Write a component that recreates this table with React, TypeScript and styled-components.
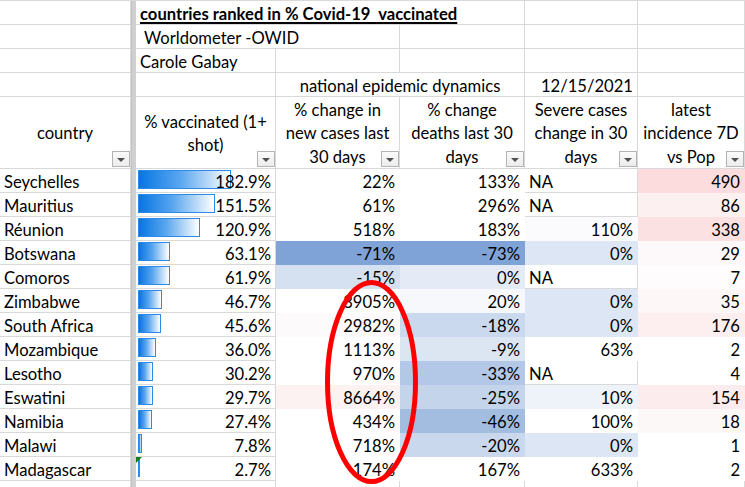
import React from "react"
import styled, { createGlobalStyle } from "styled-components"

const line = "#d9d9d9"

const GlobalStyle = createGlobalStyle`
  html, body {
    margin: 0;
    padding: 0;
    background: #fff;
    overflow: hidden;
  }
  body {
    font-family: Lato, "Open Sans", sans-serif;
    font-size: 16.6px;
    color: #000;
  }
`

const Page = styled.div`
  position: relative;
  width: 745px;
  height: 487px;
  overflow: hidden;
`

const Sheet = styled.div`
  display: grid;
  grid-template-columns: 131px 5px 140px 124px 125px 113px 107px;
  grid-template-rows: repeat(4, 24px) 72px repeat(14, 24px);
  border-top: 1px solid ${line};
`

const Frozen = styled.div`
  grid-column: 2;
  grid-row: 1 / -1;
  background: #d0d0d0;
  border-left: 1px solid #c4c4c4;
`

type CellProps = {
  $span?: number
  $align?: "left" | "right" | "center"
  $bg?: string
  $grid?: boolean
}

const Cell = styled.div<CellProps>`
  grid-column: span ${p => p.$span ?? 1};
  position: relative;
  box-sizing: border-box;
  background: ${p => p.$bg ?? "#fff"};
  border-right: 1px solid ${p => (p.$grid === false ? "transparent" : line)};
  border-bottom: 1px solid ${p => (p.$grid === false ? "transparent" : line)};
  padding: 2px 4px 0 4px;
  line-height: 22px;
  white-space: pre;
  text-align: ${p => p.$align ?? "left"};
`

const Title = styled.span`
  font-weight: 700;
  text-decoration: underline;
  text-decoration-thickness: 1.5px;
  text-underline-offset: 2px;
`

const HeaderCell = styled.div`
  position: relative;
  box-sizing: border-box;
  border-right: 1px solid ${line};
  border-bottom: 1px solid ${line};
  display: flex;
  align-items: center;
  justify-content: center;
  text-align: center;
  line-height: 23.5px;
  padding: 3px 2px 0;
  white-space: nowrap;
`

const FilterButton = styled.div`
  position: absolute;
  right: 0;
  bottom: 1px;
  width: 18px;
  height: 16px;
  box-sizing: border-box;
  border: 1px solid #b3b3b3;
  background: linear-gradient(#fbfbfb, #ececec);
  display: flex;
  align-items: center;
  justify-content: center;

  &::after {
    content: "";
    border-left: 4px solid transparent;
    border-right: 4px solid transparent;
    border-top: 4px solid #505050;
    margin-top: 1px;
  }
`

const BarCell = styled(Cell)`
  text-align: right;
`

const Bar = styled.div`
  position: absolute;
  left: 2px;
  top: 1px;
  height: 19px;
  box-sizing: border-box;
  border: 1px solid #2b8bea;
  background: linear-gradient(to right, #0676e2, #5aa6ef 45%, #ffffff);
`

const ErrorMark = styled.div`
  position: absolute;
  left: 0;
  top: 0;
  width: 0;
  height: 0;
  border-top: 6px solid #1c7a1c;
  border-right: 6px solid transparent;
`

const Value = styled.span`
  position: relative;
`

const Overlay = styled.svg`
  position: absolute;
  left: 0;
  top: 0;
  pointer-events: none;
`

type Fill = [string, string?]

type Row = {
  country: string
  vacc: number
  cases: Fill
  deaths: Fill
  severe: Fill
  incidence: Fill
  flag?: boolean
}

const rows: Row[] = [
  { country: "Seychelles", vacc: 182.9, cases: ["22%"], deaths: ["133%"], severe: ["NA"], incidence: ["490", "#fcdcdd"] },
  { country: "Mauritius", vacc: 151.5, cases: ["61%"], deaths: ["296%"], severe: ["NA"], incidence: ["86", "#fcf0f1"] },
  { country: "Réunion", vacc: 120.9, cases: ["518%"], deaths: ["183%"], severe: ["110%", "#fbfbfd"], incidence: ["338", "#fce1e2"] },
  { country: "Botswana", vacc: 63.1, cases: ["-71%", "#7fa3d6"], deaths: ["-73%", "#7fa3d6"], severe: ["0%", "#dce6f4"], incidence: ["29", "#fdf8f9"] },
  { country: "Comoros", vacc: 61.9, cases: ["-15%", "#d5e0f1"], deaths: ["0%", "#e4ebf6"], severe: ["NA"], incidence: ["7", "#fefcfd"] },
  { country: "Zimbabwe", vacc: 46.7, cases: ["3905%"], deaths: ["20%", "#f6f8fc"], severe: ["0%", "#dce6f4"], incidence: ["35", "#fdf7f8"] },
  { country: "South Africa", vacc: 45.6, cases: ["2982%", "#fdfafb"], deaths: ["-18%", "#cbd9ee"], severe: ["0%", "#dce6f4"], incidence: ["176", "#fdeff0"] },
  { country: "Mozambique", vacc: 36.0, cases: ["1113%"], deaths: ["-9%", "#dce6f3"], severe: ["63%"], incidence: ["2"] },
  { country: "Lesotho", vacc: 30.2, cases: ["970%"], deaths: ["-33%", "#b3c8e6"], severe: ["NA"], incidence: ["4"] },
  { country: "Eswatini", vacc: 29.7, cases: ["8664%", "#fdf2f2"], deaths: ["-25%", "#c3d4eb"], severe: ["10%", "#eef2f9"], incidence: ["154", "#fdeced"] },
  { country: "Namibia", vacc: 27.4, cases: ["434%"], deaths: ["-46%", "#a3bde1"], severe: ["100%"], incidence: ["18", "#fdf8f8"] },
  { country: "Malawi", vacc: 7.8, cases: ["718%"], deaths: ["-20%", "#c9d8ed"], severe: ["0%", "#dce6f4"], incidence: ["1"] },
  { country: "Madagascar", vacc: 2.7, cases: ["174%"], deaths: ["167%"], severe: ["633%"], incidence: ["2"], flag: true },
]

const headers = [
  "country",
  "% vaccinated (1+\nshot)",
  "% change in\nnew cases last\n30 days",
  "% change\ndeaths last 30\ndays",
  "Severe cases\nchange in 30\ndays",
  "latest\nincidence 7D\nvs Pop",
]

const Header = ({ text }: { text: string }) => (
  <HeaderCell>
    <span>
      {text.split("\n").map((t, i) => (
        <React.Fragment key={i}>
          {i > 0 && <br />}
          {t}
        </React.Fragment>
      ))}
    </span>
    <FilterButton />
  </HeaderCell>
)

const DataCell = ({ fill }: { fill: Fill }) => {
  const [text, bg] = fill
  if (text === "NA") return <Cell $align="left">NA</Cell>
  return (
    <Cell $grid={false} $align="right" $bg={bg}>
      {text}
    </Cell>
  )
}

export default function App() {
  return (
    <Page>
      <GlobalStyle />
      <Sheet>
        <Frozen />

        <Cell />
        <Cell $span={3}>
          <Title>countries ranked in % Covid-19  vaccinated</Title>
        </Cell>
        <Cell />
        <Cell />

        <Cell />
        <Cell $span={2}> Worldometer -OWID</Cell>
        <Cell />
        <Cell />
        <Cell />

        <Cell />
        <Cell>Carole Gabay</Cell>
        <Cell />
        <Cell />
        <Cell />
        <Cell />

        <Cell />
        <Cell />
        <Cell $span={2} $align="center">national epidemic dynamics</Cell>
        <Cell $align="right">12/15/2021</Cell>
        <Cell />

        {headers.map(h => (
          <Header key={h} text={h} />
        ))}

        {rows.map(r => (
          <React.Fragment key={r.country}>
            <Cell>{r.country}</Cell>
            <BarCell>
              <Bar style={{ width: Math.max(2, r.vacc * 0.51) }} />
              {r.flag && <ErrorMark />}
              <Value>{r.vacc.toFixed(1)}%</Value>
            </BarCell>
            <DataCell fill={r.cases} />
            <DataCell fill={r.deaths} />
            <DataCell fill={r.severe} />
            <DataCell fill={r.incidence} />
          </React.Fragment>
        ))}

        <Cell />
        <Cell />
        <Cell />
        <Cell />
        <Cell />
        <Cell />
      </Sheet>

      <Overlay width={745} height={487}>
        <ellipse cx={371.5} cy={382} rx={44} ry={99.5} fill="none" stroke="#ff0000" strokeWidth={5} />
      </Overlay>
    </Page>
  )
}
